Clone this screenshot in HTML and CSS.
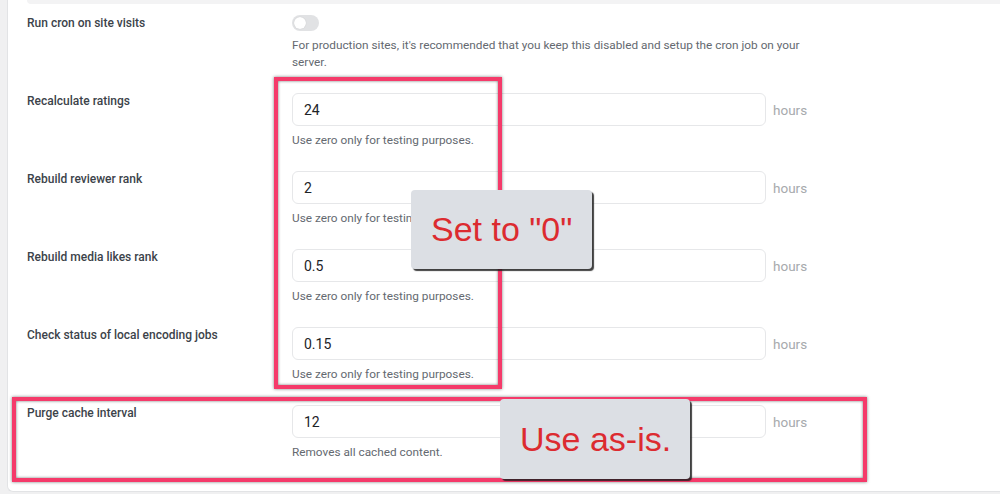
FILE: index.html
```html
<!DOCTYPE html>
<html>
<head>
<meta charset="utf-8">
<link rel="stylesheet" href="styles.css">
</head>
<body>
<div class="page">
  <div class="card">
    <div class="prev"></div>
    <div class="rows">
      <div class="row">
        <div class="label">Run cron on site visits</div>
        <div class="control">
          <div class="toggle"><span class="knob"></span></div>
          <p class="desc">For production sites, it's recommended that you keep this disabled and setup the cron job on your server.</p>
        </div>
      </div>
      <div class="row">
        <div class="label">Recalculate ratings</div>
        <div class="control">
          <div class="field"><input class="input" type="text" value="24"><span class="unit">hours</span></div>
          <p class="desc">Use zero only for testing purposes.</p>
        </div>
      </div>
      <div class="row">
        <div class="label">Rebuild reviewer rank</div>
        <div class="control">
          <div class="field"><input class="input" type="text" value="2"><span class="unit">hours</span></div>
          <p class="desc">Use zero only for testing purposes.</p>
        </div>
      </div>
      <div class="row">
        <div class="label">Rebuild media likes rank</div>
        <div class="control">
          <div class="field"><input class="input" type="text" value="0.5"><span class="unit">hours</span></div>
          <p class="desc">Use zero only for testing purposes.</p>
        </div>
      </div>
      <div class="row">
        <div class="label">Check status of local encoding jobs</div>
        <div class="control">
          <div class="field"><input class="input" type="text" value="0.15"><span class="unit">hours</span></div>
          <p class="desc">Use zero only for testing purposes.</p>
        </div>
      </div>
      <div class="row">
        <div class="label">Purge cache interval</div>
        <div class="control">
          <div class="field"><input class="input" type="text" value="12"><span class="unit">hours</span></div>
          <p class="desc">Removes all cached content.</p>
        </div>
      </div>
    </div>
  </div>

  <div class="mark mark-zero"></div>
  <div class="mark mark-purge"></div>
  <div class="note note-zero">Set to "0"</div>
  <div class="note note-purge">Use as-is.</div>
</div>
</body>
</html>
```

FILE: styles.css
```css
html, body {
  margin: 0;
  padding: 0;
  background: #f0f0f1;
}

.page {
  position: relative;
  width: 1000px;
  height: 494px;
  overflow: hidden;
  padding-left: 7px;
  box-sizing: border-box;
  font-family: Roboto, "Liberation Sans", sans-serif;
}

.card {
  background: #fff;
  border: 1px solid #e2e3e5;
  border-top: 0;
  border-right: 0;
  border-radius: 0 0 0 6px;
  padding: 0 0 30px 19px;
}

.prev {
  height: 4px;
  background: #f3f3f4;
  border-radius: 0 0 0 4px;
  margin-bottom: 11px;
}

.rows {
  display: flex;
  flex-direction: column;
  gap: 22px;
}

.row {
  display: grid;
  grid-template-columns: 265px 520px;
}

.label {
  font-size: 12px;
  font-weight: 500;
  line-height: 14px;
  padding-top: 1px;
  color: #3c434a;
}

.control {
  display: flex;
  flex-direction: column;
}

.toggle {
  width: 27px;
  height: 16px;
  border-radius: 8px;
  background: #e1e2e4;
  position: relative;
  margin-bottom: 6px;
}

.knob {
  position: absolute;
  left: 2px;
  top: 2px;
  width: 12px;
  height: 12px;
  border-radius: 50%;
  background: #fff;
  box-shadow: 0 0 1px rgba(0,0,0,0.2);
}

.field {
  display: flex;
  align-items: center;
  margin-bottom: 6px;
}

.input {
  width: 474px;
  height: 33px;
  box-sizing: border-box;
  border: 1px solid #e6e7e9;
  border-radius: 6px;
  padding: 0 11px;
  font-family: Roboto, "Liberation Sans", sans-serif;
  font-size: 14px;
  color: #1d2327;
  background: #fff;
  outline: none;
  margin: 0;
}

.unit {
  margin-left: 7px;
  font-size: 13.5px;
  color: #a7aaad;
}

.desc {
  margin: 0;
  font-size: 11.8px;
  line-height: 17px;
  color: #646970;
}

.mark {
  position: absolute;
  border: 4px solid #f53a6a;
  box-shadow: 0 0 3px rgba(0,0,0,0.5), inset 0 0 3px rgba(0,0,0,0.55);
  box-sizing: border-box;
}

.mark-zero {
  left: 274px;
  top: 77px;
  width: 228px;
  height: 312px;
}

.mark-purge {
  left: 12px;
  top: 397px;
  width: 855px;
  height: 85px;
}

.note {
  position: absolute;
  background: #dcdfe4;
  border-radius: 4px;
  box-shadow: 2px 2px 1px rgba(30,30,30,0.85);
  color: #dc2b30;
  font-family: "Liberation Sans", Arial, sans-serif;
  font-size: 34px;
  display: flex;
  align-items: center;
  box-sizing: border-box;
  padding-left: 20px;
}

.note-zero {
  left: 411px;
  top: 190px;
  width: 181px;
  height: 79px;
}

.note-purge {
  left: 500px;
  top: 399px;
  width: 190px;
  height: 80px;
}
```
